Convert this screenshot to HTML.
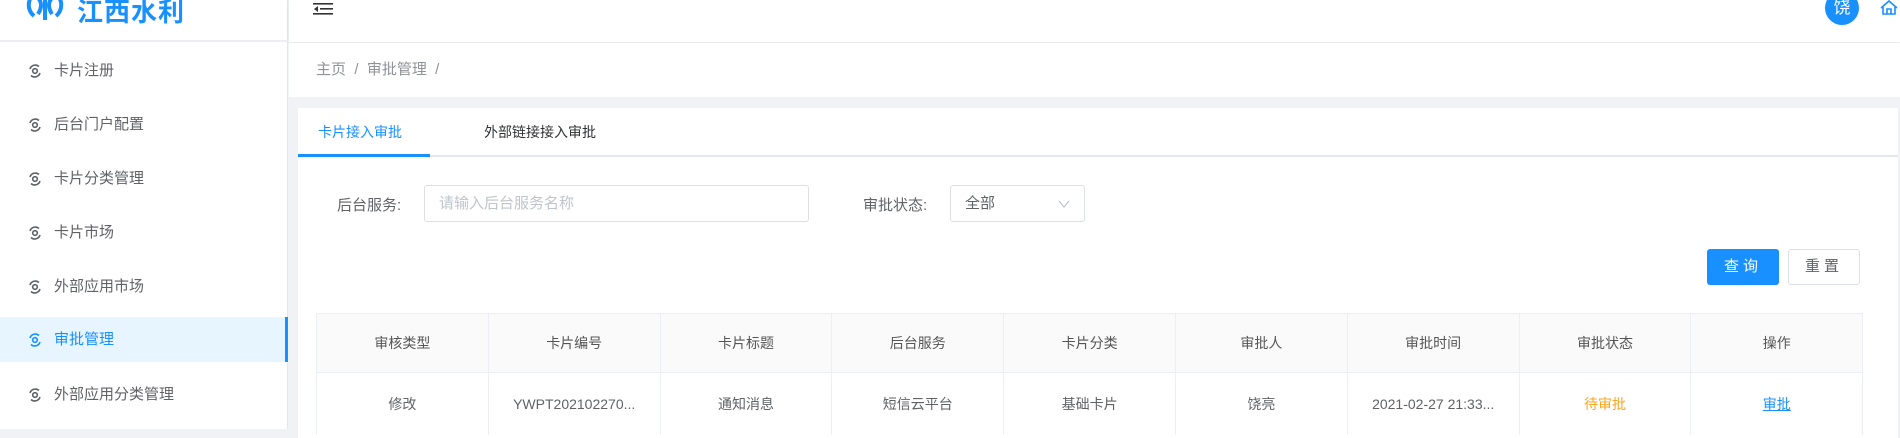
<!DOCTYPE html>
<html><head><meta charset="utf-8"><style>
*{margin:0;padding:0;box-sizing:border-box}
body{width:1900px;height:429px;overflow:hidden;background:#f0f2f5;font-family:"Liberation Sans","Noto Sans CJK SC",sans-serif;color:#606266;position:relative}
.abs{position:absolute}
.side{left:0;top:0;width:288px;height:429px;background:#fff;border-right:1px solid #e6e6e6}
.logo{left:0;top:0;width:288px;height:42px;border-bottom:2px solid #ebeef5}
.mi{left:0;width:285px;height:45px;font-size:15px;line-height:45px;color:#606266}
.mi span{position:absolute;left:54px}
.mi svg{position:absolute;left:28px;top:16px}
.mi.act{background:#e6f5ff;color:#1890ff}
.head{left:289px;top:0;width:1611px;height:42px;background:#fff;box-shadow:0 1px 4px rgba(0,0,0,.06)}
.bc{left:289px;top:43px;width:1611px;height:54px;background:#fff;font-size:15px;line-height:54px;color:#909399;padding-left:27px}
.card{left:298px;top:108px;width:1600px;height:330px;background:#fff}
.tabline{left:298px;top:155px;width:1600px;height:2px;background:#e4e7ed}
.tab{font-size:14px;top:122px}
.inp{border:1px solid #dcdfe6;border-radius:3px;height:37px;font-size:15px;line-height:35px;padding-left:14px}
.lbl{font-size:15px;color:#606266;top:194px}
table{position:absolute;left:316px;top:313px;width:1546px;border-collapse:collapse;font-size:14px;table-layout:fixed}
td,th{border:1px solid #ebeef5;text-align:center;font-weight:normal;color:#606266;overflow:hidden;white-space:nowrap}
th{height:59px;background:#fafafa;color:#555}
td{height:62px;color:#606266;border-bottom:none}
</style></head><body>
<div class="abs side"></div>
<div class="abs logo">
<svg class="abs" style="left:26px;top:-8px" width="38" height="30" viewBox="0 0 38 30"><g fill="none" stroke="#1890ff" stroke-width="4"><path d="M8 2C1 8 1 18 8 24"/><path d="M30 2c7 6 7 16 0 22"/><path d="M19 0v28"/><path d="M12 6c4 4 4 10 0 16"/><path d="M26 6c-4 4-4 10 0 16"/></g></svg>
<div class="abs" style="left:77px;top:-8px;font-size:26px;font-weight:bold;color:#1890ff;letter-spacing:1px">江西水利</div>
</div>
<div class="abs mi" style="top:48px"><svg width="14" height="14" viewBox="0 0 14 14" fill="none" stroke="currentColor" stroke-width="1.6"><circle cx="7" cy="7" r="2.3"/><path d="M2 5a5.5 5.5 0 0 1 9-2.5M12 9a5.5 5.5 0 0 1-9 2.5"/></svg><span>卡片注册</span></div>
<div class="abs mi" style="top:102px"><svg width="14" height="14" viewBox="0 0 14 14" fill="none" stroke="currentColor" stroke-width="1.6"><circle cx="7" cy="7" r="2.3"/><path d="M2 5a5.5 5.5 0 0 1 9-2.5M12 9a5.5 5.5 0 0 1-9 2.5"/></svg><span>后台门户配置</span></div>
<div class="abs mi" style="top:156px"><svg width="14" height="14" viewBox="0 0 14 14" fill="none" stroke="currentColor" stroke-width="1.6"><circle cx="7" cy="7" r="2.3"/><path d="M2 5a5.5 5.5 0 0 1 9-2.5M12 9a5.5 5.5 0 0 1-9 2.5"/></svg><span>卡片分类管理</span></div>
<div class="abs mi" style="top:210px"><svg width="14" height="14" viewBox="0 0 14 14" fill="none" stroke="currentColor" stroke-width="1.6"><circle cx="7" cy="7" r="2.3"/><path d="M2 5a5.5 5.5 0 0 1 9-2.5M12 9a5.5 5.5 0 0 1-9 2.5"/></svg><span>卡片市场</span></div>
<div class="abs mi" style="top:264px"><svg width="14" height="14" viewBox="0 0 14 14" fill="none" stroke="currentColor" stroke-width="1.6"><circle cx="7" cy="7" r="2.3"/><path d="M2 5a5.5 5.5 0 0 1 9-2.5M12 9a5.5 5.5 0 0 1-9 2.5"/></svg><span>外部应用市场</span></div>
<div class="abs mi act" style="top:317px"><svg width="14" height="14" viewBox="0 0 14 14" fill="none" stroke="currentColor" stroke-width="1.6"><circle cx="7" cy="7" r="2.3"/><path d="M2 5a5.5 5.5 0 0 1 9-2.5M12 9a5.5 5.5 0 0 1-9 2.5"/></svg><span>审批管理</span></div>
<div class="abs" style="left:285px;top:317px;width:3px;height:45px;background:#1890ff"></div>
<div class="abs mi" style="top:372px"><svg width="14" height="14" viewBox="0 0 14 14" fill="none" stroke="currentColor" stroke-width="1.6"><circle cx="7" cy="7" r="2.3"/><path d="M2 5a5.5 5.5 0 0 1 9-2.5M12 9a5.5 5.5 0 0 1-9 2.5"/></svg><span>外部应用分类管理</span></div>

<div class="abs head"></div>
<svg class="abs" style="left:313px;top:1px" width="22" height="16" viewBox="0 0 22 16" fill="#333"><rect x="0" y="2" width="20" height="1.6"/><rect x="7" y="7" width="13" height="1.6"/><rect x="0" y="12" width="20" height="1.6"/><path d="M5 5v6L1 8z"/></svg>
<div class="abs" style="left:1825px;top:-9px;width:34px;height:34px;border-radius:50%;background:#1890ff;color:#fff;font-size:17px;text-align:center;line-height:34px">饶</div>
<svg class="abs" style="left:1880px;top:0" width="18" height="15" viewBox="0 0 18 15" fill="none" stroke="#1890ff" stroke-width="1.6"><path d="M1 8L9 1l8 7M3 7v7h12V7M7 14V9h4v5"/></svg>

<div class="abs bc">主页 &nbsp;/&nbsp; 审批管理 &nbsp;/</div>
<div class="abs card"></div>
<div class="abs tabline"></div>
<div class="abs" style="left:298px;top:154px;width:132px;height:3px;background:#1890ff"></div>
<div class="abs tab" style="left:318px;color:#1890ff">卡片接入审批</div>
<div class="abs tab" style="left:484px;color:#303133">外部链接接入审批</div>

<div class="abs lbl" style="left:337px">后台服务:</div>
<div class="abs inp" style="left:424px;top:185px;width:385px;color:#c0c4cc">请输入后台服务名称</div>
<div class="abs lbl" style="left:863px">审批状态:</div>
<div class="abs inp" style="left:950px;top:185px;width:135px;color:#606266">全部<svg class="abs" style="left:107px;top:14px" width="12" height="8" viewBox="0 0 12 8" fill="none" stroke="#c0c4cc" stroke-width="1.2"><path d="M1 1l5 6 5-6"/></svg></div>

<div class="abs" style="left:1707px;top:249px;width:72px;height:36px;background:#1890ff;border-radius:3px;color:#fff;font-size:15px;text-align:center;line-height:36px;letter-spacing:4px">查询</div>
<div class="abs" style="left:1788px;top:249px;width:72px;height:36px;border:1px solid #dcdfe6;border-radius:3px;color:#606266;font-size:15px;text-align:center;line-height:34px;letter-spacing:4px">重置</div>

<table><colgroup><col span="9" style="width:171.8px"></colgroup><tr><th>审核类型</th><th>卡片编号</th><th>卡片标题</th><th>后台服务</th><th>卡片分类</th><th>审批人</th><th>审批时间</th><th>审批状态</th><th>操作</th></tr>
<tr><td>修改</td><td>YWPT202102270...</td><td>通知消息</td><td>短信云平台</td><td>基础卡片</td><td>饶亮</td><td>2021-02-27 21:33...</td><td style="color:#f5a623">待审批</td><td><u style="color:#1890ff">审批</u></td></tr></table>
</body></html>
